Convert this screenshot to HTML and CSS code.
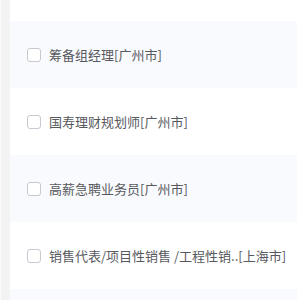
FILE: index.html
```html
<!DOCTYPE html>
<html lang="zh-CN">
<head>
	<meta charset="UTF-8">
	<title>职位列表</title>
	<link rel="stylesheet" href="styles.css">
</head>
<body>
	<div class="page">
		<div class="side"></div>
		<ul class="jobList">
			<li class="odd"><label><span class="box"></span>筹备组经理[广州市]</label></li>
			<li><label><span class="box"></span>国寿理财规划师[广州市]</label></li>
			<li class="odd"><label><span class="box"></span>高薪急聘业务员[广州市]</label></li>
			<li><label><span class="box"></span>销售代表/项目性销售 /工程性销..[上海市]</label></li>
			<li class="odd last"></li>
		</ul>
	</div>
</body>
</html>
```

FILE: styles.css
```css
*{margin: 0;padding: 0;box-sizing: border-box;}
ul{list-style: none;}
body{font-family: "Noto Sans CJK SC", "Liberation Sans", sans-serif;color: #57595e;background: #fff;}
.page{display: flex;height: 300px;overflow: hidden;}
.side{width: 10px;background: #f3f3f3;border-left: 1px solid #fafafa;}
.jobList{flex: 1;padding-top: 21px;padding-right: 3px;}
.jobList li{height: 67px;display: flex;align-items: center;padding-left: 17px;font-size: 13px;}
.jobList li.odd{background: #f9fafd;}
.jobList li.last{height: 11px;}
.jobList label{display: flex;align-items: center;cursor: pointer;white-space: nowrap;}
.box{width: 14px;height: 14px;border: 1px solid #c6c9cf;border-radius: 3px;background: #fff;margin-right: 8px;}
```
